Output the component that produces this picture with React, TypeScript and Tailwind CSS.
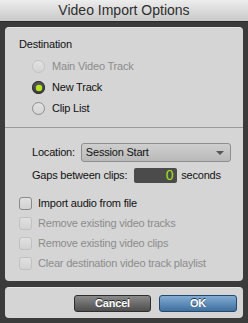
import React from "react";

const font = { fontFamily: '"Liberation Sans", Arial, sans-serif' };

function Radio({ state }: { state: "disabled" | "on" | "off" }) {
  if (state === "on") {
    return (
      <span className="flex h-[13px] w-[13px] items-center justify-center rounded-full bg-gradient-to-b from-[#5a5a5a] to-[#3a3a3a] shadow-[inset_0_0_0_1px_#2e2e2e]">
        <span className="h-[6px] w-[6px] rounded-full bg-[#b6e51c] shadow-[0_0_1px_#d8ff5a]" />
      </span>
    );
  }
  return (
    <span
      className={`h-[13px] w-[13px] rounded-full border bg-gradient-to-b from-[#e2e2e2] to-[#d4d4d4] ${
        state === "disabled" ? "border-[#c2c2c2]" : "border-[#8e8e8e]"
      }`}
    />
  );
}

function Check({ disabled, label }: { disabled?: boolean; label: string }) {
  return (
    <div className="flex h-[20px] items-center">
      <span
        className={`h-[13px] w-[13px] rounded-[3px] border bg-gradient-to-b from-[#e0e0e0] to-[#d2d2d2] ${
          disabled ? "border-[#c0c0c0]" : "border-[#8a8a8a]"
        }`}
      />
      <span className={`ml-[6px] ${disabled ? "text-[#8c8c8c]" : "text-[#111]"}`}>{label}</span>
    </div>
  );
}

export default function App() {
  return (
    <div
      className="flex h-[323px] w-[248px] flex-col overflow-hidden bg-[#3b3b3b] text-[11px] leading-[13px] tracking-[-0.2px]"
      style={font}
    >
      {/* title bar */}
      <div className="flex h-[22px] items-center justify-center border-b border-[#2a2a2a] bg-gradient-to-b from-[#ededed] to-[#c9c9c9] text-[14px] tracking-normal text-[#2e2e2e]">
        Video Import Options
      </div>

      <div className="flex flex-col px-[5px] pt-[5px]">
        {/* main panel */}
        <div className="flex h-[254px] flex-col rounded-[4px] border-t border-[#e4e4e4] bg-[#d5d5d5]">
          <div className="ml-[14px] mt-[10px] text-[#111]">Destination</div>

          <div className="ml-[27px] mt-[5px] flex flex-col">
            <div className="flex h-[21px] items-center">
              <Radio state="disabled" />
              <span className="ml-[7px] text-[#8c8c8c]">Main Video Track</span>
            </div>
            <div className="flex h-[21px] items-center">
              <Radio state="on" />
              <span className="ml-[7px] text-[#111]">New Track</span>
            </div>
            <div className="flex h-[21px] items-center">
              <Radio state="off" />
              <span className="ml-[7px] text-[#111]">Clip List</span>
            </div>
          </div>

          <div className="mt-[8px] h-px bg-[#9a9a9a]" />

          <div className="ml-[27px] mt-[15px] flex h-[19px] items-center">
            <span className="text-[#111]">Location:</span>
            <div className="ml-[6px] flex h-[19px] w-[150px] items-center justify-between rounded-[3px] border border-[#8e8e8e] bg-gradient-to-b from-[#cfcfcf] to-[#b9b9b9] pl-[4px] pr-[6px] text-[#111]">
              <span>Session Start</span>
              <span className="h-0 w-0 border-x-[4px] border-t-[4px] border-x-transparent border-t-[#555]" />
            </div>
          </div>

          <div className="ml-[27px] mt-[6px] flex h-[15px] items-center">
            <span className="text-[#111]">Gaps between clips:</span>
            <div className="ml-[7px] flex h-[15px] w-[43px] items-center justify-end rounded-[2px] bg-[#4b4b4b] pr-[4px] text-[14px] text-[#a3e21f]">
              0
            </div>
            <span className="ml-[4px] text-[#111]">seconds</span>
          </div>

          <div className="ml-[14px] mt-[10px] flex flex-col">
            <Check label="Import audio from file" />
            <Check disabled label="Remove existing video tracks" />
            <Check disabled label="Remove existing video clips" />
            <Check disabled label="Clear destination video track playlist" />
          </div>
        </div>

        {/* button bar */}
        <div className="mt-[6px] flex h-[31px] items-center justify-end gap-[8px] rounded-[4px] border-t border-[#e4e4e4] bg-[#d5d5d5] pr-[6px]">
          <button className="h-[17px] w-[77px] rounded-[3px] border border-[#2e2e2e] bg-gradient-to-b from-[#8a8a8a] to-[#4e4e4e] text-[11px] font-bold text-white [text-shadow:0_-1px_0_#222]">
            Cancel
          </button>
          <button className="h-[17px] w-[78px] rounded-[3px] border border-[#25486d] bg-gradient-to-b from-[#82acd3] to-[#3f6f9f] text-[11px] font-bold text-white [text-shadow:0_-1px_0_#234]">
            OK
          </button>
        </div>
      </div>
    </div>
  );
}
